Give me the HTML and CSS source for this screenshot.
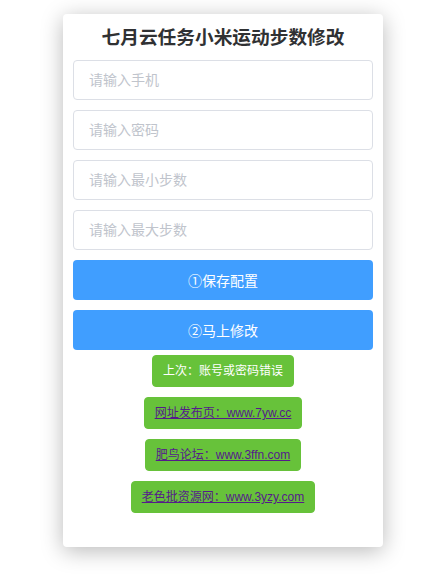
FILE: index.html
```html
<!DOCTYPE html>
<html lang="zh-CN">
<head>
  <meta charset="UTF-8">
  <meta name="viewport" content="width=device-width, initial-scale=1.0">
  <title>七月云任务小米运动步数修改</title>
  <link rel="stylesheet" href="styles.css">
</head>
<body>
  <div class="card">
    <h3 class="title">七月云任务小米运动步数修改</h3>
    <form class="stepForm">
      <input type="text" class="field" placeholder="请输入手机">
      <input type="password" class="field" placeholder="请输入密码">
      <input type="number" class="field" placeholder="请输入最小步数">
      <input type="number" class="field" placeholder="请输入最大步数">
      <button type="button" class="btn">①保存配置</button>
      <button type="button" class="btn">②马上修改</button>
    </form>
    <div class="tags">
      <span class="tag">上次：账号或密码错误</span>
      <span class="tag"><a href="#">网址发布页：www.7yw.cc</a></span>
      <span class="tag"><a href="#">肥鸟论坛：www.3ffn.com</a></span>
      <span class="tag"><a href="#">老色批资源网：www.3yzy.com</a></span>
    </div>
  </div>
</body>
</html>
```
FILE: styles.css
```css
body {
  margin: 0;
  padding: 14px 0 30px;
  background: #fff;
  font-family: "Liberation Sans", "Noto Sans CJK SC", sans-serif;
}
.card {
  width: 300px;
  margin-left: 63px;
  padding: 10px 10px 34px;
  background: #fff;
  border-radius: 4px;
  box-shadow: 0 4px 22px rgba(0,0,0,0.28);
}
.title {
  margin: 0 0 8px;
  height: 28px;
  line-height: 28px;
  text-align: center;
  font-size: 18.7px;
  font-weight: bold;
  color: #303133;
}
.stepForm {
  display: flex;
  flex-direction: column;
  gap: 10px;
}
.field {
  box-sizing: border-box;
  height: 40px;
  width: 100%;
  padding: 0 15px;
  border: 1px solid #dcdfe6;
  border-radius: 4px;
  font-family: inherit;
  font-size: 14px;
  color: #606266;
  outline: none;
}
.field::placeholder {
  color: #c0c4cc;
}
.field::-webkit-outer-spin-button,
.field::-webkit-inner-spin-button {
  -webkit-appearance: none;
  margin: 0;
}
.btn {
  height: 40px;
  width: 100%;
  border: none;
  border-radius: 4px;
  background: #409eff;
  color: #fff;
  font-family: inherit;
  font-size: 14px;
}
.tags {
  display: flex;
  flex-direction: column;
  align-items: center;
  gap: 10px;
  margin-top: 5px;
}
.tag {
  box-sizing: border-box;
  height: 32px;
  line-height: 30px;
  padding: 0 10px;
  border: 1px solid #67c23a;
  border-radius: 4px;
  background: #67c23a;
  color: #fff;
  font-size: 12px;
  white-space: nowrap;
}
.tag a {
  color: #551a8b;
}
```
